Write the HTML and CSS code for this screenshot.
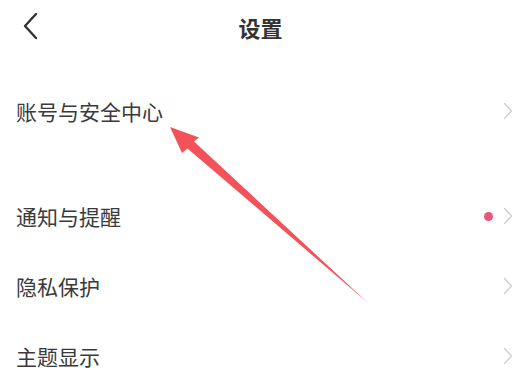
FILE: index.html
```html
<!DOCTYPE html>
<html lang="zh-CN">
<head>
<meta charset="UTF-8" />
<meta name="viewport" content="width=device-width, initial-scale=1"/>
<title>设置</title>
<link rel="stylesheet" href="styles.css">
</head>
<body>
  <div class="page">
    <header class="top-bar">
      <span class="back" aria-label="返回">
        <svg width="16" height="28" viewBox="0 0 16 28"><path d="M14 2 L3 14 L14 26" fill="none" stroke="#333" stroke-width="2.4" stroke-linecap="round" stroke-linejoin="round"/></svg>
      </span>
      <h1>设置</h1>
    </header>

    <div class="group">
      <div class="row">
        <span class="row-label">账号与安全中心</span>
        <span class="row-end"><svg class="chev" width="10" height="18" viewBox="0 0 10 18"><path d="M1.5 1.5 L8.5 9 L1.5 16.5" /></svg></span>
      </div>
    </div>

    <div class="group">
      <div class="row">
        <span class="row-label">通知与提醒</span>
        <span class="row-end"><i class="dot"></i><svg class="chev" width="10" height="18" viewBox="0 0 10 18"><path d="M1.5 1.5 L8.5 9 L1.5 16.5" /></svg></span>
      </div>
      <div class="row">
        <span class="row-label">隐私保护</span>
        <span class="row-end"><svg class="chev" width="10" height="18" viewBox="0 0 10 18"><path d="M1.5 1.5 L8.5 9 L1.5 16.5" /></svg></span>
      </div>
      <div class="row">
        <span class="row-label">主题显示</span>
        <span class="row-end"><svg class="chev" width="10" height="18" viewBox="0 0 10 18"><path d="M1.5 1.5 L8.5 9 L1.5 16.5" /></svg></span>
      </div>
    </div>

    <!-- annotation arrow drawn over the list -->
    <svg class="arrow" width="531" height="382" viewBox="0 0 531 382">
      <polygon points="170,127 199,137.5 194,141.5 367,302 187.5,148.5 182,153" fill="#f4525b"/>
    </svg>
  </div>
</body>
</html>
```

FILE: styles.css
```css
html, body {
  margin: 0;
  padding: 0;
  background: #fff;
}
.page {
  position: relative;
  width: 531px;
  height: 382px;
  overflow: hidden;
  font-family: "Noto Sans CJK SC", "Noto Sans", sans-serif;
  color: #333;
}
.top-bar {
  height: 54px;
  display: flex;
  align-items: center;
  justify-content: center;
  position: relative;
  padding-right: 10px;
}
.back {
  position: absolute;
  left: 22px;
  top: 12px;
  display: flex;
}
h1 {
  margin: 0;
  font-size: 22px;
  font-weight: 700;
  color: #333;
  line-height: 1;
}
.group {
  margin-top: 22px;
}
.group + .group {
  margin-top: 35px;
}
.row {
  height: 70px;
  display: flex;
  align-items: center;
  justify-content: space-between;
  padding: 0 18px 0 16px;
}
.row-label {
  font-size: 21px;
  line-height: 1;
  color: #3a3a3a;
}
.row-end {
  display: flex;
  align-items: center;
  gap: 10px;
}
.chev path {
  fill: none;
  stroke: #cfcfcf;
  stroke-width: 1.4;
  stroke-linecap: round;
  stroke-linejoin: round;
}
.dot {
  width: 9px;
  height: 9px;
  border-radius: 50%;
  background: #e4567a;
}
.arrow {
  position: absolute;
  left: 0;
  top: 0;
  pointer-events: none;
}
```
